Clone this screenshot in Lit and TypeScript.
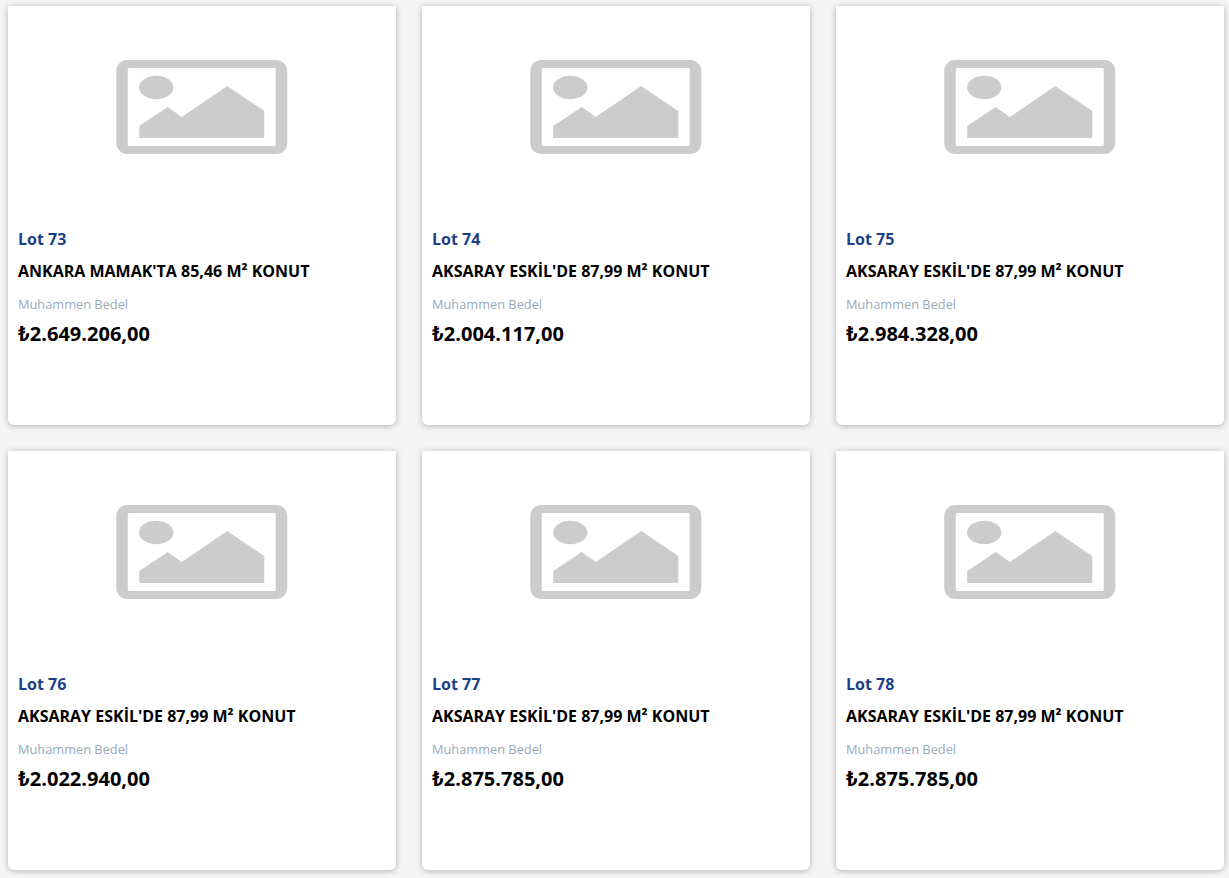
import { LitElement, html, css } from "lit";
import { customElement } from "lit/decorators.js";

const LOTS = [
  { lot: "Lot 73", title: "ANKARA MAMAK'TA 85,46 M² KONUT", price: "2.649.206,00" },
  { lot: "Lot 74", title: "AKSARAY ESKİL'DE 87,99 M² KONUT", price: "2.004.117,00" },
  { lot: "Lot 75", title: "AKSARAY ESKİL'DE 87,99 M² KONUT", price: "2.984.328,00" },
  { lot: "Lot 76", title: "AKSARAY ESKİL'DE 87,99 M² KONUT", price: "2.022.940,00" },
  { lot: "Lot 77", title: "AKSARAY ESKİL'DE 87,99 M² KONUT", price: "2.875.785,00" },
  { lot: "Lot 78", title: "AKSARAY ESKİL'DE 87,99 M² KONUT", price: "2.875.785,00" },
];

@customElement("app-root")
export class AppRoot extends LitElement {
  static styles = css`
    :host {
      display: block;
      background: #f5f5f5;
      height: 878px;
      overflow: hidden;
      font-family: "Open Sans", "Noto Sans", sans-serif;
    }
    .grid {
      display: grid;
      grid-template-columns: repeat(3, 388px);
      grid-auto-rows: 419px;
      column-gap: 26px;
      row-gap: 26px;
      padding: 6px 0 0 8px;
    }
    .card {
      background: #fff;
      border-radius: 0 0 6px 6px;
      box-shadow: 0 1px 6px rgba(0, 0, 0, 0.28);
      display: flex;
      flex-direction: column;
    }
    .thumb {
      height: 194px;
      padding: 54px 0 0 108px;
      box-sizing: border-box;
      flex: none;
    }
    .thumb svg {
      display: block;
      width: 171.500px;
      height: 94px;
    }
    .body {
      padding: 29px 10px 0;
      display: flex;
      flex-direction: column;
    }
    .lot {
      color: #1d3f87;
      font-size: 16px;
      font-weight: 700;
      line-height: 20px;
    }
    .title {
      color: #000;
      font-size: 16px;
      font-weight: 700;
      line-height: 20px;
      margin-top: 12px;
    }
    .label {
      color: #9aa9b8;
      font-size: 12.800px;
      font-weight: 400;
      line-height: 16px;
      margin-top: 15px;
    }
    .price {
      color: #000;
      font-size: 20px;
      font-weight: 700;
      line-height: 26px;
      margin-top: 9px;
    }
    .cur {
      font-family: Roboto, sans-serif;
    }
  `;

  render() {
    return html`<div class="grid">
      ${LOTS.map(
        (l) => html`<div class="card">
          <div class="thumb">
            <svg viewBox="0 0 171 94" aria-hidden="true">
              <path
                fill="#ccc"
                fill-rule="evenodd"
                d="M11 0H160A11 11 0 0 1 171 11V83A11 11 0 0 1 160 94H11A11 11 0 0 1 0 83V11A11 11 0 0 1 11 0ZM13 8A1.5 1.5 0 0 0 11.500 9.500V84.500A1.500 1.500 0 0 0 13 86H158A1.500 1.500 0 0 0 159.500 84.500V9.500A1.500 1.500 0 0 0 158 8Z"
              />
              <ellipse cx="40" cy="27.500" rx="17.200" ry="11.800" fill="#ccc" />
              <path fill="#ccc" d="M23 66L51.500 47L65.500 57L111 26L148 51V78H23Z" />
            </svg>
          </div>
          <div class="body">
            <div class="lot">${l.lot}</div>
            <div class="title">${l.title}</div>
            <div class="label">Muhammen Bedel</div>
            <div class="price"><span class="cur">₺</span>${l.price}</div>
          </div>
        </div>`
      )}
    </div>`;
  }
}
